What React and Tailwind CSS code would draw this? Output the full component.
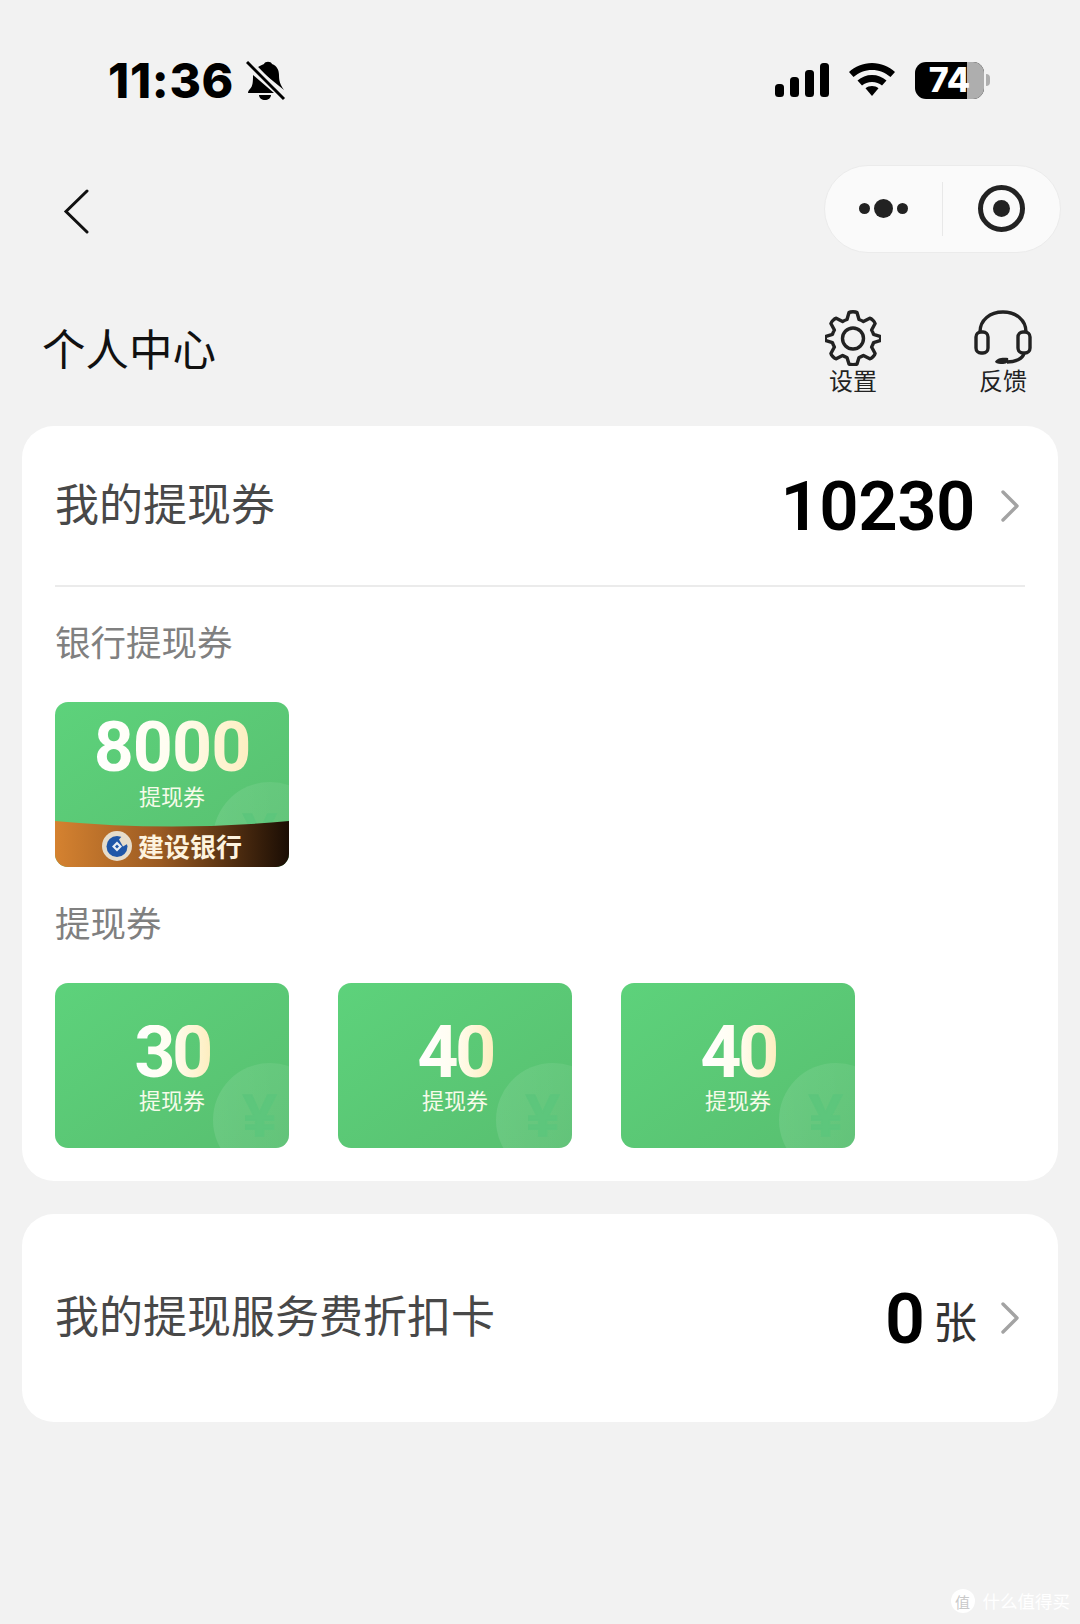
import React from 'react';

const CJK = "font-['Noto_Sans_CJK_SC','Noto_Sans',sans-serif]";

const Chevron = ({ className = '' }) => (
  <svg width="20" height="34" viewBox="0 0 20 34" fill="none" className={className}>
    <path d="M3 3l14 14L3 31" stroke="#a3a3a3" strokeWidth="3.4" strokeLinecap="round" strokeLinejoin="round" />
  </svg>
);

const StatusBar = () => (
  <div className="flex h-[160px] items-center justify-between pl-[108px] pr-[90px]">
    <div className="flex items-center gap-[12px]">
      <span className="pt-[1px] font-['Inter',sans-serif] text-[48px] leading-none font-extrabold tracking-[0.7px] text-black">11:36</span>
      <svg width="40" height="42" viewBox="0 0 40 42" className="mt-[1px]">
        <path d="M18 4c1-3 7-3 8 0 5 2 7 6 7 11 0 6 1 9 5 15l-27-22c1-1 4-3 7-4zM7 15l21 18H2c0-2 1-3 2-4 3-3 3-8 3-14zM13 35h12c0 3-3 5-6 5s-6-2-6-5z" fill="#000" />
        <path d="M1 2l37 37" stroke="#000" strokeWidth="3" />
        <path d="M5 1l35 36" stroke="#f2f2f2" strokeWidth="2" />
      </svg>
    </div>
    <div className="flex items-center gap-[20px]">
      <svg width="54" height="34" viewBox="0 0 54 34">
        <rect x="0" y="21" width="9" height="13" rx="3.5" fill="#000" />
        <rect x="15" y="14" width="9" height="20" rx="3.5" fill="#000" />
        <rect x="30" y="7" width="9" height="27" rx="3.5" fill="#000" />
        <rect x="45" y="0" width="9" height="34" rx="3.5" fill="#000" />
      </svg>
      <svg width="46" height="34" viewBox="0 0 46 34">
        <path d="M23 0c9 0 17 3.500 23 9l-4.500 5C36 9.500 30 7 23 7S10 9.500 4.500 14L0 9C6 3.500 14 0 23 0z" fill="#000" />
        <path d="M23 12c5.500 0 10.500 2 14.500 5.500l-4.500 5c-2.700-2.300-6-3.500-10-3.500s-7.300 1.200-10 3.500l-4.500-5C12.500 14 17.500 12 23 12z" fill="#000" />
        <path d="M23 23c2.500 0 4.700.8 6.500 2.300L23 33l-6.500-7.700C18.300 23.800 20.500 23 23 23z" fill="#000" />
      </svg>
      <div className="flex items-center gap-[2px]">
        <div className="relative flex h-[37px] w-[69px] items-center justify-center rounded-[11px] bg-black">
          <div className="absolute top-0 right-0 bottom-0 w-[17px] rounded-r-[11px] bg-[#aeaeae]"></div>
          <span className="relative font-['Inter',sans-serif] text-[34px] leading-none font-extrabold text-white">74</span>
        </div>
        <div className="h-[12px] w-[4px] rounded-r-full bg-[#aeaeae]"></div>
      </div>
    </div>
  </div>
);

const NavBar = () => (
  <div className="flex items-start justify-between pt-[5px] pr-[19px] pl-[61px]">
    <svg width="30" height="46" viewBox="0 0 30 46" fill="none" className="mt-[23px]">
      <path d="M26 3L5 23.500 26 44" stroke="#111" strokeWidth="3" strokeLinecap="round" />
    </svg>
    <div className="flex h-[88px] w-[237px] items-center rounded-full border border-[#ebebeb] bg-[#fafafa]">
      <div className="flex w-[117px] items-center justify-center gap-[4px] pb-[2px]">
        <span className="h-[11px] w-[11px] rounded-full bg-[#222222]"></span>
        <span className="h-[19px] w-[19px] rounded-full bg-[#222222]"></span>
        <span className="h-[11px] w-[11px] rounded-full bg-[#222222]"></span>
      </div>
      <div className="h-[54px] w-px bg-[#e8e8e8]"></div>
      <div className="flex flex-1 items-center justify-center pb-[2px]">
        <div className="flex h-[47px] w-[47px] items-center justify-center rounded-full border-[5px] border-[#222222]">
          <span className="h-[17px] w-[17px] rounded-full bg-[#222222]"></span>
        </div>
      </div>
    </div>
  </div>
);

const GearIcon = () => (
  <svg width="56" height="56" viewBox="0 0 56 56" fill="none">
    <path d="M24 2.500c1.500-1 6.500-1 8 0l2 7c1.500.5 3 1.200 4.400 2l6.400-3.300c1.800.3 5 3.600 5.300 5.300L46.600 20c.8 1.400 1.500 2.800 1.900 4.300l6.500 2c1 1.500 1 2.900 0 4.400l-6.500 2c-.4 1.500-1.100 2.900-1.900 4.300l3.500 6.500c-.3 1.800-3.500 5-5.300 5.300l-6.400-3.300c-1.400.8-2.900 1.500-4.400 2l-2 6.500c-1.500 1-6.500 1-8 0l-2-6.500c-1.500-.5-3-1.200-4.400-2l-6.400 3.300c-1.800-.3-5-3.500-5.300-5.300L9.400 37c-.8-1.400-1.500-2.800-1.900-4.300l-6.500-2c-1-1.500-1-2.900 0-4.400l6.500-2c.4-1.500 1.100-2.900 1.900-4.300l-3.500-6.500c.3-1.700 3.500-5 5.300-5.300l6.400 3.300c1.400-.8 2.900-1.500 4.400-2z" stroke="#222" strokeWidth="3.400" strokeLinejoin="round" />
    <circle cx="28" cy="28.500" r="10.500" stroke="#222" strokeWidth="3.400" />
  </svg>
);

const HeadsetIcon = () => (
  <svg width="58" height="56" viewBox="0 0 58 56" fill="none">
    <path d="M6 22C6 10 16 2 29 2s23 8 23 20" stroke="#222" strokeWidth="3.400" />
    <rect x="2" y="22" width="12" height="21" rx="5" stroke="#222" strokeWidth="3.400" />
    <rect x="44" y="22" width="12" height="21" rx="5" stroke="#222" strokeWidth="3.400" />
    <path d="M50 43c-1 6-9 9-17 9" stroke="#222" strokeWidth="3.400" />
    <path d="M21 52c1-4 8-5 13-4 1 3-1 6-5 6-3 0-6 0-8-2z" fill="#222" />
  </svg>
);

const TitleRow = () => (
  <div className={`flex items-start justify-between pt-[57px] pr-[49px] pl-[42px] ${CJK}`}>
    <h1 className="mt-[6px] text-[43.500px] leading-[64px] font-normal text-[#111111]">个人中心</h1>
    <div className="flex gap-[94px]">
      <div className="flex w-[56px] flex-col items-center">
        <GearIcon />
        <span className="mt-[-3px] text-[24px] leading-[34px] whitespace-nowrap text-[#222222]">设置</span>
      </div>
      <div className="flex w-[56px] flex-col items-center">
        <HeadsetIcon />
        <span className="mt-[-3px] text-[24px] leading-[34px] whitespace-nowrap text-[#222222]">反馈</span>
      </div>
    </div>
  </div>
);

const Voucher = ({ amount, bank }) => (
  <div className={`relative h-[165px] w-[234px] overflow-hidden rounded-[13px] bg-gradient-to-br from-[#5dd27b] to-[#58bf70] ${CJK}`}>
    {/* faded coin in the corner */}
    <div className="absolute top-[80px] left-[158px] h-[114px] w-[114px] rounded-full bg-gradient-to-r from-white/10 to-white/5">
      <span className="mt-[23px] ml-[30px] block font-['Liberation_Sans',sans-serif] text-[60px] leading-none font-bold text-[#5dc67c] [-webkit-text-stroke:1.500px_#5dc67c]">¥</span>
    </div>
    <div className={`relative flex flex-col items-center ${bank ? 'pt-[17px]' : 'pt-[42px]'}`}>
      <span className={`bg-gradient-to-r from-white via-[#fffdf0] to-[#fdeec0] bg-clip-text font-['Roboto',sans-serif] leading-[56px] font-bold text-transparent ${bank ? 'text-[70px] tracking-[-1px]' : 'text-[72px] tracking-[-3.500px]'}`}>
        {amount}
      </span>
      <span className={`text-[22px] leading-[30px] text-[#f6fbe9] ${bank ? 'mt-[5px]' : 'mt-[3px]'}`}>提现券</span>
    </div>
    {bank && (
      <div className="absolute right-0 bottom-0 left-0 flex h-[47px] items-center justify-center gap-[6px]">
        <svg className="absolute inset-0" width="234" height="47" viewBox="0 0 234 47" preserveAspectRatio="none">
          <defs>
            <linearGradient id="bankStrip" x1="0" x2="1" y1="0" y2="0">
              <stop offset="0" stopColor="#d58230" />
              <stop offset="0.45" stopColor="#9a5a22" />
              <stop offset="1" stopColor="#1a0d04" />
            </linearGradient>
          </defs>
          <path d="M0 1Q117 12 234 1V47H0z" fill="url(#bankStrip)" />
        </svg>
        {/* bank logo */}
        <svg className="relative mt-[4px]" width="30" height="30" viewBox="0 0 30 30" fill="none">
          <circle cx="15" cy="15" r="15" fill="#e6dccb" />
          <circle cx="15" cy="15.500" r="10.500" fill="#1f56a8" />
          <path d="M15 10.500l5 5-5 5-5-5z" fill="#e9eef5" />
          <path d="M15 13.500l2 2-2 2-2-2z" fill="#1f56a8" />
          <path d="M17 8.500l4-4.500 6 8-6 3.500z" fill="#e6dccb" />
        </svg>
        <span className="relative mt-[4px] text-[26px] leading-none font-bold text-[#fdf3df]">{bank}</span>
      </div>
    )}
  </div>
);

const VoucherCard = () => (
  <section className={`mx-[22px] mt-[29px] h-[755px] rounded-[32px] bg-white px-[33px] ${CJK}`}>
    <div className="flex h-[161px] items-center justify-between border-b-2 border-[#ebebeb] pr-[5px]">
      <span className="pb-[8px] text-[44px] text-[#484848]">我的提现券</span>
      <div className="flex items-center gap-[25px]">
        <span className="pt-[2px] font-['Roboto',sans-serif] text-[69px] leading-none font-semibold tracking-[-0.5px] text-black">10230</span>
        <Chevron />
      </div>
    </div>
    <p className="mt-[30px] text-[35.500px] leading-[48px] text-[#808080]">银行提现券</p>
    <div className="mt-[37px]">
      <Voucher amount="8000" bank="建设银行" />
    </div>
    <p className="mt-[31px] text-[35.500px] leading-[48px] text-[#808080]">提现券</p>
    <div className="mt-[37px] flex gap-[49px]">
      <Voucher amount="30" />
      <Voucher amount="40" />
      <Voucher amount="40" />
    </div>
  </section>
);

const DiscountCard = () => (
  <section className={`mx-[22px] mt-[33px] flex h-[208px] items-center justify-between rounded-[32px] bg-white pr-[38px] pl-[33px] ${CJK}`}>
    <span className="pb-[8px] text-[44px] text-[#484848]">我的提现服务费折扣卡</span>
    <div className="flex items-center">
      <span className="pt-[2px] font-['Roboto',sans-serif] text-[70px] leading-none font-semibold text-black">0</span>
      <span className="mt-[3px] ml-[8px] text-[44px] leading-none text-[#333333]">张</span>
      <Chevron className="ml-[23px]" />
    </div>
  </section>
);

const Watermark = () => (
  <div className={`absolute right-[10px] bottom-[11px] flex items-center gap-[8px] ${CJK}`}>
    <span className="flex h-[24px] w-[24px] items-center justify-center rounded-full bg-white text-[15px] leading-none text-[#c9c9c9]">值</span>
    <span className="text-[17.500px] leading-none text-white">什么值得买</span>
  </div>
);

export default function App() {
  return (
    <div className="relative h-[1624px] w-[1080px] overflow-hidden bg-[#f2f2f2]">
      <StatusBar />
      <NavBar />
      <TitleRow />
      <VoucherCard />
      <DiscountCard />
      <Watermark />
    </div>
  );
}
